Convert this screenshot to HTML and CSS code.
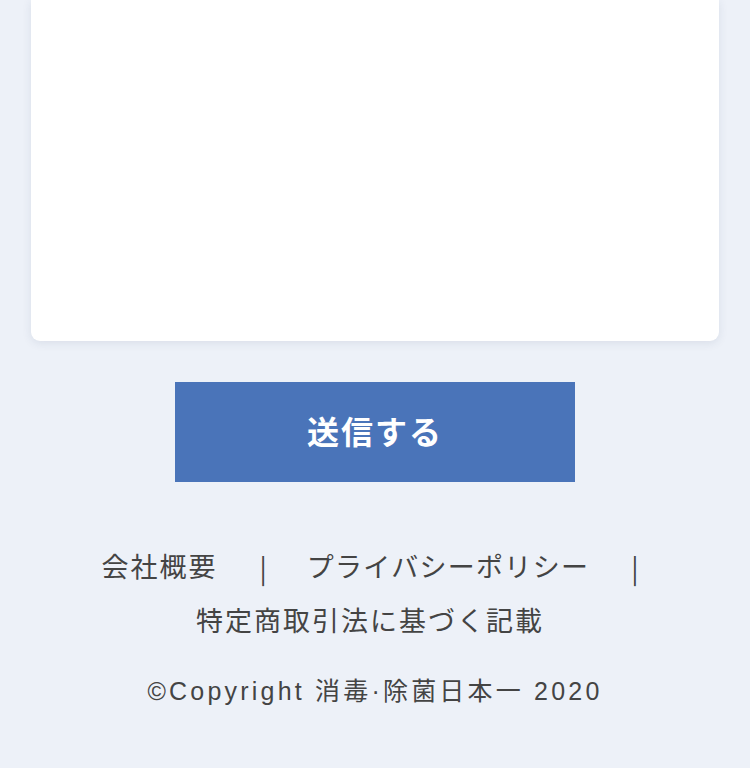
FILE: index.html
```html
<!DOCTYPE html>
<html lang="ja">
<head>
  <meta charset="UTF-8" />
  <meta name="viewport" content="width=device-width, initial-scale=1" />
  <title>お問い合わせ - 消毒・除菌日本一</title>
  <link rel="stylesheet" href="styles.css">
</head>
<body>
  <div class="pagina">
    <div class="cartao"></div>

    <div class="acoes">
      <button type="submit" class="enviar">送信する</button>
    </div>

    <footer class="rodape">
      <ul class="links">
        <li><a href="#">会社概要</a><span class="sep">|</span></li>
        <li><a href="#" class="estreito">プライバシーポリシー</a><span class="sep">|</span></li>
        <li><a href="#">特定商取引法に基づく記載</a></li>
      </ul>
      <p class="copy">©Copyright 消毒·除菌日本一 2020</p>
    </footer>
  </div>
</body>
</html>
```

FILE: styles.css
```css
* {
  margin: 0;
  padding: 0;
  box-sizing: border-box;
}
html, body {
  height: 100%;
  background: #edf1f8;
  font-family: "Liberation Sans", "Noto Sans CJK JP", sans-serif;
  color: #444;
}
.pagina {
  width: 100%;
}
.cartao {
  height: 341px;
  margin: 0 31px;
  background: #fff;
  border-radius: 0 0 9px 9px;
  box-shadow: 0 2px 10px rgba(40, 60, 100, 0.1);
}
.acoes {
  display: flex;
  justify-content: center;
  padding-top: 41px;
}
.enviar {
  width: 400px;
  height: 100px;
  padding-bottom: 5px;
  background: #4a74b9;
  border: none;
  color: #fff;
  font-family: "Noto Sans CJK JP", sans-serif;
  font-size: 32px;
  font-weight: 700;
  letter-spacing: 2px;
  cursor: pointer;
}
.rodape {
  padding-top: 59px;
  text-align: center;
}
.links {
  list-style: none;
  padding-left: 30px;
  display: flex;
  flex-wrap: wrap;
  justify-content: center;
}
.links li {
  display: flex;
  align-items: center;
  margin-right: 40px;
  line-height: 54px;
  font-size: 27px;
  letter-spacing: 2px;
}
.links a {
  color: #444;
  text-decoration: none;
}
.links a.estreito {
  letter-spacing: 1.3px;
}
.sep {
  margin-left: 42px;
  letter-spacing: 0;
  font-family: "Noto Sans CJK JP", sans-serif;
}
.copy {
  margin-top: 22px;
  font-size: 25px;
  letter-spacing: 3.2px;
  color: #444;
}
```
